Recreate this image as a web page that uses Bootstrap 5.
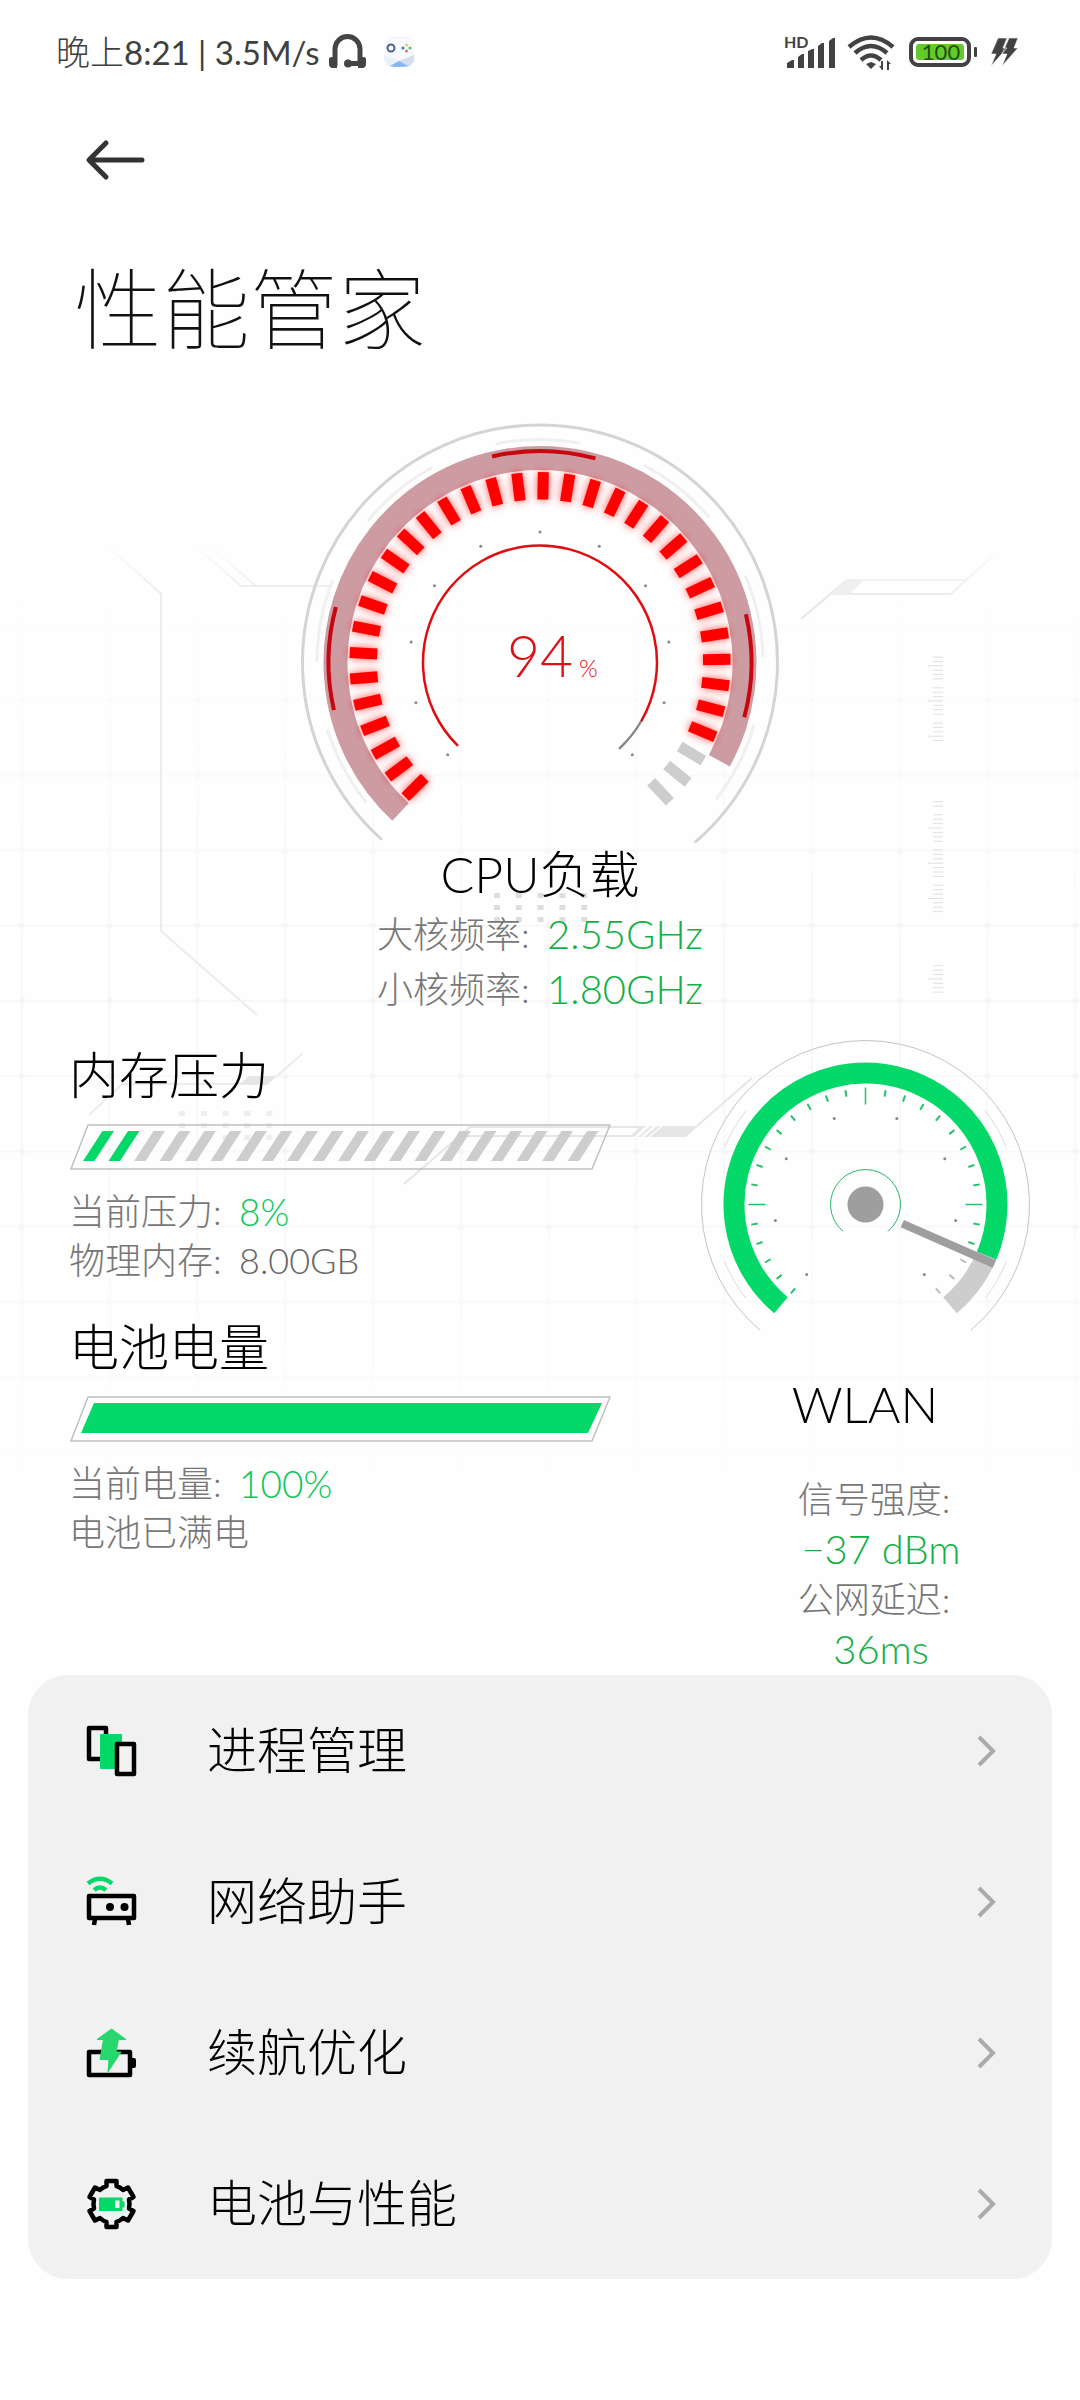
<!DOCTYPE html>
<html lang="zh-CN">
<head>
<meta charset="utf-8">
<meta name="viewport" content="width=device-width, initial-scale=1">
<title>性能管家</title>
<link rel="stylesheet" href="https://cdn.jsdelivr.net/npm/bootstrap@5.3.0/dist/css/bootstrap.min.css">
<style>
  body { background: #fefefe; color: #000; font-family: Lato, "Noto Sans CJK SC", sans-serif; font-weight: 300; }
  svg { display: block; flex: none; }
  .backdrop { width: 100%; z-index: 0; }
  .screen { z-index: 1; }
  .statusbar { height: 104px; padding: 0 60px 0 56px; font-size: 33px; line-height: 48px; color: #404040; font-weight: 400; }
  .statusbar .period { font-size: 34px; font-weight: 300; }
  .topnav { height: 112px; padding: 0 84px; }
  .page-title { font-size: 88px; line-height: 96px; font-weight: 100; color: #111; margin: 44px 74px 66px; }
  .head { font-size: 50px; line-height: 56px; font-weight: 300; margin: 0; }
  .info { font-size: 36px; line-height: 49px; color: #666; margin: 0; }
  .info dt { font-weight: 300; color: #777; width: 170px; }
  .info dd { margin: 0; }
  .info-cpu { line-height: 55px; margin-top: 5px; }
  .val { font-size: 40px; font-weight: 300; color: #12b044; }
  .val-bright { font-size: 37px; color: #0cc85a; }
  .gauges { margin-top: 30px; }
  .metrics { padding: 0 0 0 69px; }
  .metric + .metric { margin-top: 34px; }
  .metric .bar { margin: 20px 0 16px; }
  .wlan { padding: 0 0 0 20px; margin-top: -9px; }
  .wlan .head { margin: 42px 0; }
  .wlan .info { line-height: 50px; }
  .wlan .info dt { width: auto; padding-left: 18px; }
  .wlan .info dd { padding-left: 32px; }
  .menu { margin: 1px 28px 0; border-radius: 40px; background: #f1f1f1; overflow: hidden; }
  .menu a { height: 151px; padding: 0 54px 0 57px; background: #f1f1f1; color: #000; font-size: 50px; font-weight: 300; gap: 68px; }
</style>
<script src="https://cdn.jsdelivr.net/npm/bootstrap@5.3.0/dist/js/bootstrap.bundle.min.js"></script>
</head>
<body>
<div class="position-relative overflow-hidden">

<svg class="backdrop position-absolute top-0 start-0" viewBox="0 0 1080 2400" aria-hidden="true">
  <defs>
    <linearGradient id="fade" x1="0" y1="0" x2="0" y2="1">
      <stop offset="0" stop-color="#fff" stop-opacity="0"/><stop offset=".4" stop-color="#fff"/>
      <stop offset=".65" stop-color="#fff"/><stop offset="1" stop-color="#fff" stop-opacity="0"/>
    </linearGradient>
    <mask id="gridmask" maskUnits="userSpaceOnUse" x="0" y="590" width="1080" height="900"><rect y="590" width="1080" height="900" fill="url(#fade)"/></mask>
    <linearGradient id="lf" gradientUnits="userSpaceOnUse" x1="0" y1="545" x2="0" y2="594">
      <stop offset="0" stop-color="#ececec" stop-opacity="0"/><stop offset="1" stop-color="#ececec"/>
    </linearGradient>
  </defs>
  <g id="grid" mask="url(#gridmask)" stroke="#f8f8f8" stroke-width="2" fill="#f5f5f5"></g>
  <g fill="none" stroke="#ececec" stroke-width="2">
    <path stroke="url(#lf)" d="M111 549 161 594V931L257 1015M199 549 241 586H333M213 549 256 586M995 554 951 594H830M966 580H847"/>
    <path stroke="#e8e8e8" d="M801 619 847 580"/>
    <path d="M89 1115 122 1084H246M277 1076 302 1054"/>
    <path d="M404 1184 470 1127H640M461 1136H632M697 1126 752 1078" stroke="#e6e6e6"/>
  </g>
  <path fill="#efefef" d="M830 595 847 580H864L848 595Z"/>
  <path fill="#e6e6e6" d="M238 1085 249 1076H277L267 1085ZM629 1137 641 1126H646L634 1137ZM638 1137 650 1126H653L641 1137ZM644 1137 657 1126H661L648 1137ZM650 1137 663 1126H698L686 1137Z"/>
  <g id="dots" fill="#dedede"></g>
  <g id="rulers" stroke="#e0e0e0" stroke-width="1"></g>
</svg>

<div class="screen position-relative">
<header class="statusbar d-flex justify-content-between align-items-center">
  <div class="d-flex align-items-center">
    <span><span class="period">晚上</span>8:21 | 3.5M/s</span>
    <svg class="ms-2" width="40" height="40" viewBox="330 32 40 40" aria-hidden="true"><path fill="none" stroke="#444" stroke-width="5" d="M337 66V49a12 12 0 0 1 25 0V66M350 63.500H362"/><path fill="#444" d="M331 59q0-2 3-2h5v11h-5q-3-1-3-4ZM368 59q0-2-3-2h-5v11h5q3-1 3-4Z"/><circle cx="350" cy="63.500" r="4" fill="#444"/></svg>
    <svg class="ms-3" width="30" height="30" viewBox="0 0 30 30" aria-hidden="true"><rect width="30" height="30" rx="9" fill="#e9f1fb"/><path fill="#f6f9fd" d="M0 8Q1 0 9 1H21Q29 0 30 8V18L15 24 0 18Z"/><path fill="#d3deee" d="M30 18V23Q28 29 23 30L15 24Z"/><path fill="#86b6ee" d="M15 24 24 29Q21 30 15 30T6 29Z"/><circle cx="7" cy="11" r="3.500" fill="none" stroke="#50608f" stroke-width="2"/><circle cx="22.500" cy="8" r="1.600" fill="#f2cf55"/><circle cx="19" cy="11" r="1.600" fill="#4c78d8"/><circle cx="26" cy="11" r="1.600" fill="#65c088"/><circle cx="22.500" cy="14" r="1.600" fill="#e87858"/></svg>
  </div>
  <svg width="238" height="40" viewBox="782 32 238 40" role="img" aria-label="信号 无线 电量 充电">
    <g fill="#424242">
      <text x="784" y="48" font-size="16" font-weight="700" font-family="Lato, sans-serif">HD</text>
      <path d="M787 68V63L792 60H794V68ZM798 68V57L802 54H804V68ZM808 68V51L812 49H814V68ZM818 68V46L822 43H824V68ZM829 68V41L833 38H835V68ZM866 64 871 62 876 64 871 69Z"/>
      <path d="M882 70 879 66H881V61H883V70ZM887 60 891 64H889V70H887Z"/>
      <path d="M998 38H1007L1003 48H1007L991 66 996 54H991ZM1009 38H1018L1014 48H1018L1002 66 1007 54H1002Z" stroke="#fefefe" stroke-width=".6"/>
      <rect x="974" y="47" width="3" height="10" rx="1"/>
    </g>
    <g fill="none" stroke="#424242" stroke-width="4.500"><path d="M849 47Q871 28 893 47M855 53Q871 39 887 53M861 60Q871 51 881 60"/></g>
    <rect x="911" y="39" width="58" height="26" rx="7" fill="none" stroke="#424242" stroke-width="4"/>
    <rect x="916" y="44" width="48" height="16" rx="3" fill="#62cb2b"/>
    <text x="941" y="60" text-anchor="middle" font-size="22" font-family="Lato, sans-serif" fill="#244d10">100</text>
  </svg>
</header>

<nav class="topnav d-flex align-items-center">
  <button class="btn p-0 border-0" type="button" aria-label="返回"><svg width="64" height="48" viewBox="84 136 64 48"><path fill="none" stroke="#333" stroke-width="5" stroke-linecap="round" stroke-linejoin="round" d="M106 143 89 160 106 177M90 160H142"/></svg></button>
</nav>

<main>
  <h1 class="page-title">性能管家</h1>

  <section class="d-flex flex-column align-items-center">
    <svg width="480" height="424" viewBox="300 422 480 424" role="img" aria-label="CPU负载 94%">
      <defs><filter id="glow" x="-20%" y="-20%" width="140%" height="140%"><feGaussianBlur stdDeviation="4"/></filter></defs>
      <g id="cpu" transform="translate(540 662.500)" fill="none"></g>
      <text x="507" y="677" font-size="57" font-weight="300" font-family="Lato, sans-serif" fill="#de1014">94</text>
      <text x="579" y="677" font-size="24" font-weight="300" font-family="Lato, sans-serif" fill="#de1014">%</text>
    </svg>
    <h2 class="head">CPU负载</h2>
    <dl class="info info-cpu">
      <div class="d-flex"><dt>大核频率:</dt><dd class="val">2.55GHz</dd></div>
      <div class="d-flex"><dt>小核频率:</dt><dd class="val">1.80GHz</dd></div>
    </dl>
  </section>

  <section class="row g-0 gauges">
    <div class="col-7 metrics">
      <div class="metric">
        <h2 class="head">内存压力</h2>
        <svg class="bar" width="544" height="48" viewBox="69 1123 544 48" role="img" aria-label="8%">
          <path fill="none" stroke="#c0c0c0" stroke-width="1.500" stroke-linejoin="round" d="M88 1125H610L592 1169H71Z"/><g id="mem"></g>
        </svg>
        <dl class="info">
          <div class="d-flex"><dt>当前压力:</dt><dd class="val val-bright">8%</dd></div>
          <div class="d-flex"><dt>物理内存:</dt><dd>8.00GB</dd></div>
        </dl>
      </div>
      <div class="metric">
        <h2 class="head">电池电量</h2>
        <svg class="bar" width="544" height="48" viewBox="69 1123 544 48" role="img" aria-label="100%">
          <path fill="#fff" stroke="#c0c0c0" stroke-width="1.500" stroke-linejoin="round" d="M88 1125H610L592 1169H71Z"/><path fill="#04d868" d="M94 1131H602L588 1161H81Z"/>
        </svg>
        <dl class="info">
          <div class="d-flex"><dt>当前电量:</dt><dd class="val val-bright">100%</dd></div>
          <div class="d-flex"><dt class="w-auto">电池已满电</dt></div>
        </dl>
      </div>
    </div>
    <div class="col-5 wlan d-flex flex-column align-items-center">
      <svg width="332" height="296" viewBox="699 1038 332 296" role="img" aria-label="WLAN">
        <g id="net" transform="translate(865.500 1204.500)" fill="none"></g>
      </svg>
      <h2 class="head">WLAN</h2>
      <dl class="info text-center">
        <dt>信号强度:</dt><dd class="val">−37 dBm</dd>
        <dt>公网延迟:</dt><dd class="val">36ms</dd>
      </dl>
    </div>
  </section>

  <div class="menu list-group list-group-flush">
    <a href="#" class="list-group-item border-0 d-flex align-items-center">
      <svg width="54" height="54" viewBox="0 0 54 54" aria-hidden="true"><rect x="4" y="4" width="17" height="31" fill="none" stroke="#000" stroke-width="4.500" stroke-linejoin="round"/><rect x="15" y="10" width="22" height="35" rx="1" fill="#04d868"/><rect x="32" y="20" width="17" height="30" fill="#f1f1f1" stroke="#000" stroke-width="4.500" stroke-linejoin="round"/></svg>
      <span class="flex-grow-1">进程管理</span>
      <svg width="24" height="36" viewBox="0 0 24 36" aria-hidden="true"><path d="M5 4 19 18 5 32" fill="none" stroke="#aaa" stroke-width="4"/></svg>
    </a>
    <a href="#" class="list-group-item border-0 d-flex align-items-center">
      <svg width="54" height="54" viewBox="0 0 54 54" aria-hidden="true"><path d="M3 8.500Q15 -1 27 8.500M9 15Q15 10 21 15" fill="none" stroke="#04d868" stroke-width="4.500"/><rect x="4" y="21" width="45" height="22" fill="none" stroke="#000" stroke-width="4.500" stroke-linejoin="round"/><path d="M10 44 9 50M43 44 44 50" stroke="#000" stroke-width="4.500"/><circle cx="25" cy="32" r="4"/><circle cx="39.500" cy="32" r="4"/></svg>
      <span class="flex-grow-1">网络助手</span>
      <svg width="24" height="36" viewBox="0 0 24 36" aria-hidden="true"><path d="M5 4 19 18 5 32" fill="none" stroke="#aaa" stroke-width="4"/></svg>
    </a>
    <a href="#" class="list-group-item border-0 d-flex align-items-center">
      <svg width="54" height="54" viewBox="0 0 54 54" aria-hidden="true"><rect x="4" y="26" width="41" height="23" fill="none" stroke="#000" stroke-width="4.500" stroke-linejoin="round"/><path d="M46 32h3q2 0 2 2v6q0 2-2 2h-3z"/><path fill="#27d66d" stroke="#27d66d" stroke-linejoin="round" d="M26.500 3 41 13.500H33.500L31 26H36L23 46 24 33.500H15L18.500 13.500H12Z"/></svg>
      <span class="flex-grow-1">续航优化</span>
      <svg width="24" height="36" viewBox="0 0 24 36" aria-hidden="true"><path d="M5 4 19 18 5 32" fill="none" stroke="#aaa" stroke-width="4"/></svg>
    </a>
    <a href="#" class="list-group-item border-0 d-flex align-items-center">
      <svg width="54" height="54" viewBox="0 0 54 54" aria-hidden="true"><path fill="none" stroke="#000" stroke-width="4.500" stroke-linejoin="round" d="M21.500 4H31.500V9Q35 10 38 13L43 10.500 48.500 20 44 22.500Q45 27 44 31.500L48.500 34 43 43.500 38 41Q35 44 31.500 45V50H21.500V45Q18 44 15 41L10 43.500 4.500 34 9 31.500Q8 27 9 22.500L4.500 20 10 10.500 15 13Q18 10 21.500 9Z"/><rect x="14" y="20.500" width="23.500" height="13.500" rx="1" fill="#04d868"/><rect x="30" y="23.500" width="4.500" height="7.500" fill="#f1f1f1"/><rect x="37" y="24.500" width="2.500" height="6" fill="#04d868"/></svg>
      <span class="flex-grow-1">电池与性能</span>
      <svg width="24" height="36" viewBox="0 0 24 36" aria-hidden="true"><path d="M5 4 19 18 5 32" fill="none" stroke="#aaa" stroke-width="4"/></svg>
    </a>
  </div>
</main>
</div>
</div>

<script>
// Angles are in degrees, clockwise from 12 o'clock.
const pt = (r, a) => [r * Math.sin(a * Math.PI / 180), -r * Math.cos(a * Math.PI / 180)].map(v => v.toFixed(2)).join(' ');
const arc = (r, a, b, color, w, cap = 'butt') =>
  `<path d="M${pt(r, a)}A${r} ${r} 0 ${b - a > 180 ? 1 : 0} 1 ${pt(r, b)}" stroke="${color}" stroke-width="${w}" stroke-linecap="${cap}"/>`;
const spoke = (r1, r2, a, color, w, cap = 'butt') =>
  `<path d="M${pt(r1, a)}L${pt(r2, a)}" stroke="${color}" stroke-width="${w}" stroke-linecap="${cap}"/>`;
const dot = (r, a) => { const [x, y] = pt(r, a).split(' '); return `<circle cx="${x}" cy="${y}" r="1.5" fill="#888"/>`; };
const put = (id, s) => { document.getElementById(id).innerHTML = s; };

// CPU gauge
let s = arc(237.5, -138, 139, '#d4d4d4', 3, 'round');
for (let a = -129; a < 120; a += 39.2) s += arc(223, a, a + 21.6, '#f0f0f0', 3);
s += arc(204.5, -137, 118.7, '#cd9ca3', 24);
[[-103, -74.8], [-13.1, 15.2], [76.8, 105]].forEach(([a, b]) => { s += arc(211.5, a, b, '#c8060f', 4); });
let lit = '', off = '';
for (let i = 0; i < 35; i++) {
  if (i < 32) lit += spoke(163, 190.5, -135 + i * 8, '#f00', 11);
  else off += spoke(163, 190.5, -135 + i * 8, '#cdcdcd', 11);
}
s += `<g filter="url(#glow)" opacity=".7">${lit}</g>${lit}${off}`;
s += arc(117, 120, 137, '#888', 2.5, 'round') + arc(117, -135.5, 120, '#e00c10', 2.5);
for (let a = -135; a <= 135; a += 27) s += dot(130.5, a);
put('cpu', s);

// WLAN gauge
s = arc(164, -140, 140, '#c4c4c4', 1);
[[-68, -52], [-128, -112], [52, 68], [112, 128]].forEach(([a, b]) => { s += arc(152, a, b, '#dcdcdc', 1); });
s += arc(131.5, 112, 140, '#cdcdcd', 21) + arc(131.5, -140, 112.8, '#04d868', 21);
for (let a = -140; a <= 140; a += 10)
  s += a % 90 === 0 ? spoke(100, 117, a, '#24c06a', 1.5) : spoke(109.5, 116, a, a < 120 ? '#24c06a' : '#bbb', 2);
for (let a = -140; a <= 140; a += 40) s += dot(91.5, a);
s += arc(35, -140, 140, '#24b866', 1) + '<circle r="18" fill="#9e9e9e"/><path d="M36.800 19.200 128.800 59.500" stroke="#9e9e9e" stroke-width="8"/>';
put('net', s);

// Memory bar segments
s = '';
for (let i = 0; i < 20; i++) {
  const x = 83 + i * 25.5;
  s += `<path fill="${i < 2 ? '#04d868' : '#cdcdcd'}" d="M${x} 1161h11.500l19.500-30h-11.500z"/>`;
}
put('mem', s);

// Backdrop grid, dot clusters and rulers
s = '';
for (let x = 21.8; x < 1080; x += 87.8) s += `<path d="M${x} 590V1490"/>`;
for (let y = 625; y < 1480; y += 75.2) {
  s += `<path d="M0 ${y}H1080"/>`;
  for (let x = 21.8; x < 1080; x += 87.8) s += `<circle cx="${x}" cy="${y}" r="3" stroke="none"/>`;
}
put('grid', s);
s = '';
for (const [x0, y0, o] of [[494, 893, 1], [179, 1111, .5]])
  for (let r = 0; r < 3; r++) for (let c = 0; c < 5; c++)
    s += `<rect x="${x0 + c * 21.8}" y="${y0 + r * 12}" width="6" height="5" opacity="${o}"/>`;
put('dots', s);
s = '';
for (const [y0, n, first] of [[657, 20, 2], [801.6, 26, 6], [965.7, 7, 3]])
  for (let i = 0; i < n; i++) {
    const k = (i - first + 16) % 8;
    if (k !== 4) s += `<path d="M${k === 0 ? 928 : 933} ${y0 + i * 4.4}H943"/>`;
  }
put('rulers', s);
</script>
</body>
</html>
